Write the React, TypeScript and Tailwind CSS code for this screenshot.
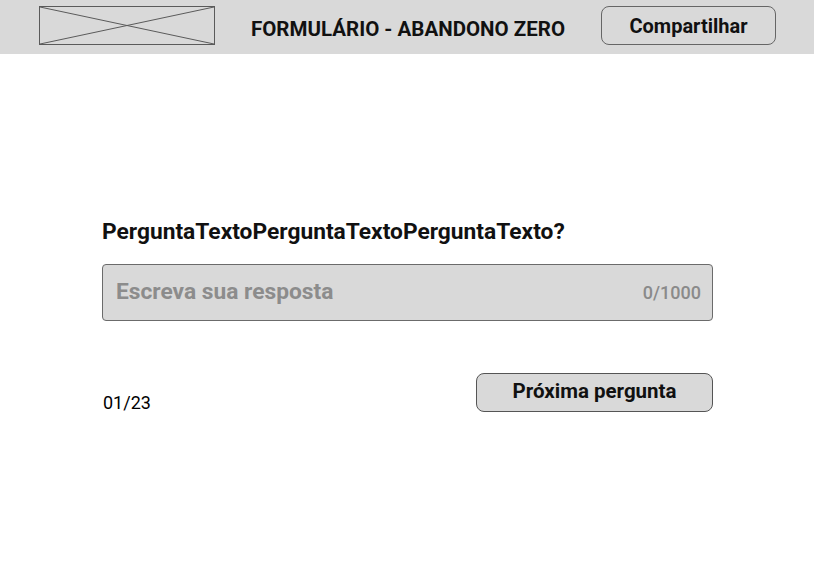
import React from 'react';

const LogoPlaceholder: React.FC = () => (
    <div className="relative w-[176px] h-[39px] border border-[#5a5a5a]">
        <svg className="absolute inset-0 w-full h-full" viewBox="0 0 174 37" preserveAspectRatio="none">
            <line x1="0" y1="0" x2="174" y2="37" stroke="#5a5a5a" strokeWidth="1" />
            <line x1="0" y1="37" x2="174" y2="0" stroke="#5a5a5a" strokeWidth="1" />
        </svg>
    </div>
);

export default function App() {
    return (
        <div className="min-h-[576px] w-full bg-white text-black" style={{ fontFamily: 'Roboto, "Noto Sans", sans-serif' }}>
            <header className="h-[54px] bg-[#d9d9d9] flex items-start justify-between pt-[6px] pl-[39px] pr-[38px]">
                <LogoPlaceholder />
                <h1 className="self-center pb-[2px] text-[20.5px] font-bold text-[#111]">FORMULÁRIO - ABANDONO ZERO</h1>
                <button className="w-[175px] h-[39px] rounded-[8px] border border-[#666] text-[20px] font-bold text-[#111] leading-none">
                    Compartilhar
                </button>
            </header>

            <main className="pl-[102px] pr-[101px] pt-[164px]">
                <h2 className="text-[22.75px] font-bold leading-[27px] text-[#111]">
                    PerguntaTextoPerguntaTextoPerguntaTexto?
                </h2>

                <div className="mt-[19px] h-[57px] bg-[#d9d9d9] border border-[#6b6b6b] rounded-[4px] flex items-center justify-between pl-[13px] pr-[11px]">
                    <span className="text-[22.75px] font-bold text-[#8c8c8c]">Escreva sua resposta</span>
                    <span className="text-[18px] font-medium text-[#8a8a8a]">0/1000</span>
                </div>

                <div className="mt-[52px] flex items-end justify-between">
                    <span className="text-[18px] leading-[21px] pl-px mb-[-1px]">01/23</span>
                    <button className="w-[237px] h-[39px] bg-[#d9d9d9] border border-[#555] rounded-[8px] text-[20.5px] font-bold text-[#111] leading-none pb-[2px]">
                        Próxima pergunta
                    </button>
                </div>
            </main>
        </div>
    );
}
